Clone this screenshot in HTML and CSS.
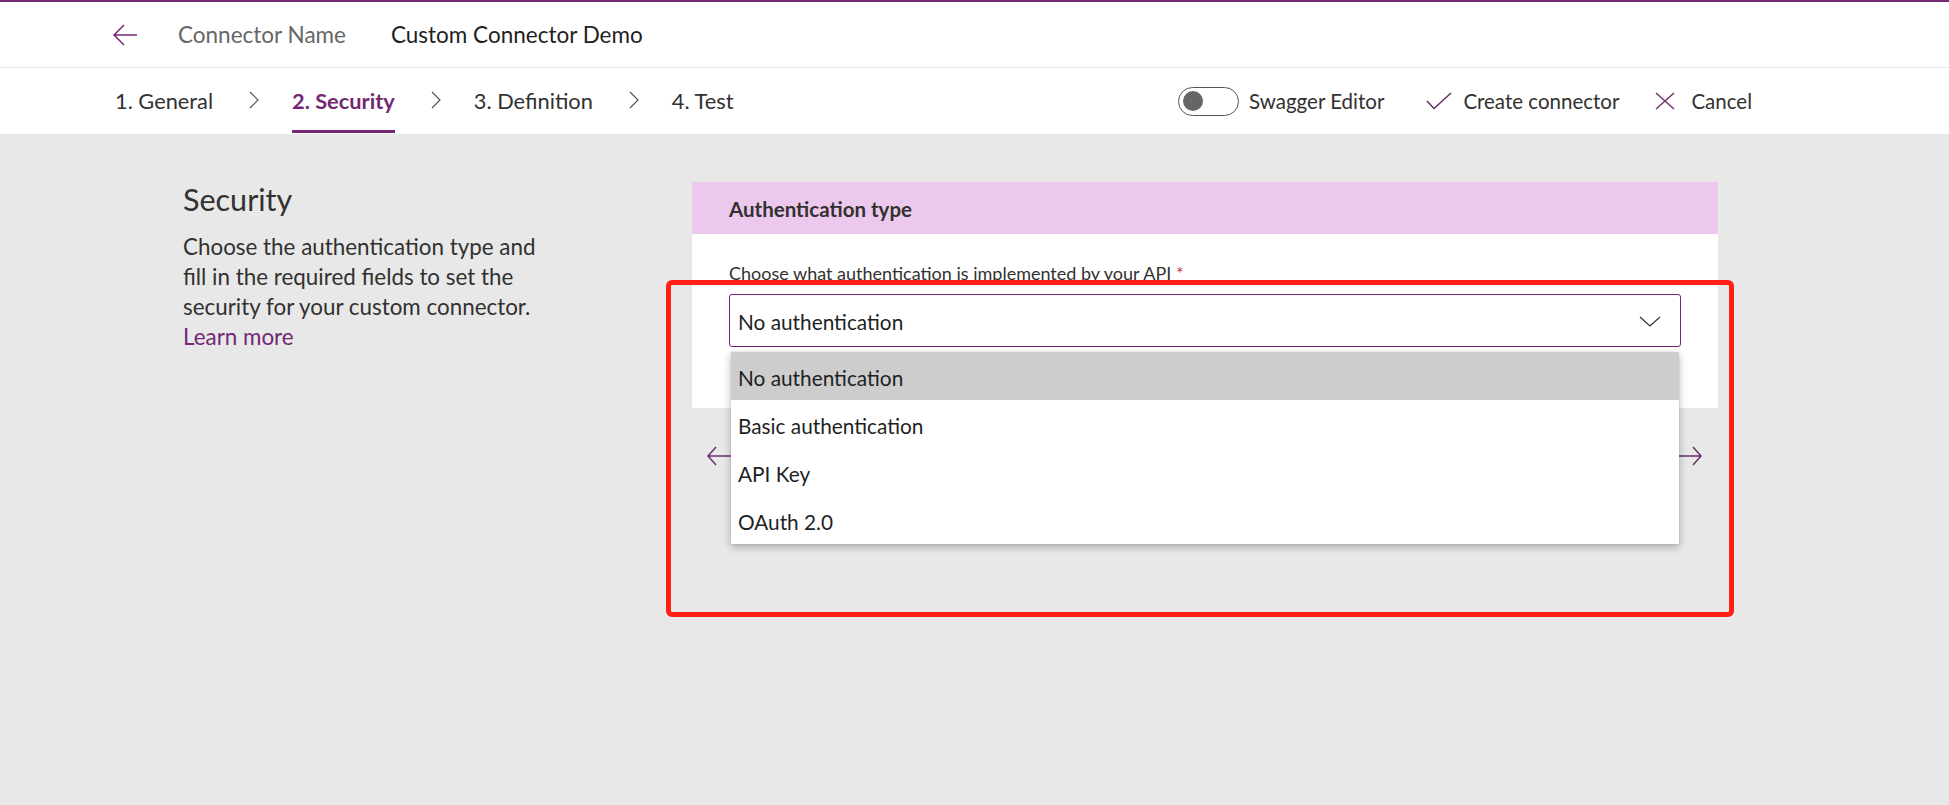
FILE: index.html
```html
<!DOCTYPE html>
<html lang="en">
<head>
<meta charset="utf-8">
<title>Custom Connector Demo - Security</title>
<link rel="stylesheet" href="styles.css">
</head>
<body>
<div class="app">
  <div class="topline"></div>
  <header class="titlebar">
    <button class="back" aria-label="Back">
      <svg width="24" height="22" viewBox="0 0 24 22"><path d="M11 1 L1 11 L11 21 M1 11 H24" fill="none" stroke="#742774" stroke-width="1.5"/></svg>
    </button>
    <span class="name-label">Connector Name</span>
    <span class="name-value">Custom Connector Demo</span>
  </header>
  <nav class="steps">
    <ol class="tabs">
      <li class="tab">1. General</li>
      <li class="sep"><svg width="10" height="18" viewBox="0 0 10 18"><path d="M1 1 L9 9 L1 17" fill="none" stroke="#555" stroke-width="1.2"/></svg></li>
      <li class="tab active">2. Security</li>
      <li class="sep"><svg width="10" height="18" viewBox="0 0 10 18"><path d="M1 1 L9 9 L1 17" fill="none" stroke="#555" stroke-width="1.2"/></svg></li>
      <li class="tab">3. Definition</li>
      <li class="sep"><svg width="10" height="18" viewBox="0 0 10 18"><path d="M1 1 L9 9 L1 17" fill="none" stroke="#555" stroke-width="1.2"/></svg></li>
      <li class="tab">4. Test</li>
    </ol>
    <div class="actions">
      <label class="toggle"><span class="switch"><span class="knob"></span></span>Swagger Editor</label>
      <button class="action create">
        <svg width="26" height="18" viewBox="0 0 26 18"><path d="M1 9 L8 16.5 L25 1" fill="none" stroke="#5e2a60" stroke-width="1.4"/></svg>
        Create connector
      </button>
      <button class="action cancel">
        <svg width="20" height="18" viewBox="0 0 20 18"><path d="M1 1 L19 17 M19 1 L1 17" fill="none" stroke="#6a2e6c" stroke-width="1.4"/></svg>
        Cancel
      </button>
    </div>
  </nav>
  <main class="content">
    <section class="intro">
      <h1 class="intro-title">Security</h1>
      <p class="intro-text">Choose the authentication type and<br>fill in the required fields to set the<br>security for your custom connector.<br><a class="link" href="#">Learn more</a></p>
    </section>
    <section class="panel">
      <div class="card">
        <div class="card-head">Authentication type</div>
        <div class="card-body">
          <div class="field-label">Choose what authentication is implemented by your API <span class="req">*</span></div>
          <div class="select-wrap">
            <div class="select">
              <span>No authentication</span>
              <svg width="22" height="11" viewBox="0 0 22 11"><path d="M1 1 L11 10 L21 1" fill="none" stroke="#333" stroke-width="1.2"/></svg>
            </div>
            <ul class="menu">
              <li class="menu-item selected">No authentication</li>
              <li class="menu-item">Basic authentication</li>
              <li class="menu-item">API Key</li>
              <li class="menu-item">OAuth 2.0</li>
            </ul>
          </div>
        </div>
      </div>
      <div class="pager">
        <svg width="24" height="20" viewBox="0 0 24 20"><path d="M9 1 L1 10 L9 19 M1 10 H24" fill="none" stroke="#6a2e6c" stroke-width="1.5"/></svg>
        <svg width="24" height="20" viewBox="0 0 24 20"><path d="M15 1 L23 10 L15 19 M0 10 H23" fill="none" stroke="#6a2e6c" stroke-width="1.5"/></svg>
      </div>
      <div class="highlight"></div>
    </section>
  </main>
</div>
</body>
</html>
```

FILE: styles.css
```css
* { box-sizing: border-box; }
html, body { margin: 0; padding: 0; }
body {
  font-family: Lato, "Open Sans", sans-serif;
  color: #252423;
  background: #e8e8e8;
  width: 1949px;
  height: 805px;
  overflow: hidden;
}
.app { display: flex; flex-direction: column; height: 805px; }
.topline { height: 2px; background: #742774; }
.titlebar {
  height: 66px;
  background: #fff;
  border-bottom: 1px solid #e6e6e6;
  display: flex;
  align-items: center;
  padding-left: 113px;
  font-size: 22.5px;
}
.back {
  border: 0; background: none; padding: 0; margin: 0;
  width: 24px; height: 22px; display: flex;
  margin-right: 41px;
}
.name-label { color: #666; margin-right: 45px; }
.name-value { color: #1f1f1f; }

.steps {
  height: 66px;
  background: #fff;
  display: flex;
  align-items: stretch;
  padding-left: 115px;
  padding-right: 197px;
}
.tabs {
  list-style: none; margin: 0; padding: 0;
  display: flex; align-items: stretch;
  font-size: 21.8px;
}
.tab {
  position: relative;
  display: flex; align-items: center;
  color: #323130;
  padding-bottom: 2px;
}
.tab.active { color: #742774; font-weight: 700; }
.tab.active::after {
  content: "";
  position: absolute; left: 0; right: 0; bottom: 1px;
  height: 3px; background: #742774;
}
.sep { display: flex; align-items: center; margin: 0 33px 0 36px; padding-bottom: 2px; }
.actions {
  margin-left: auto;
  display: flex; align-items: center;
  font-size: 20.5px;
  color: #323130;
}
.toggle { display: flex; align-items: center; gap: 10px; margin-right: 42px; }
.switch {
  width: 61px; height: 29px;
  border: 1px solid #555;
  border-radius: 15px;
  display: flex; align-items: center;
  padding-left: 4px;
}
.knob { width: 20px; height: 20px; border-radius: 50%; background: #666; }
.action {
  border: 0; background: none; padding: 0;
  font: inherit; color: inherit;
  display: flex; align-items: center;
}
.create { gap: 11px; margin-right: 36px; }
.cancel { gap: 16px; }

.content { flex: 1; display: flex; padding-top: 48px; }
.intro { width: 692px; padding-left: 183px; }
.intro-title {
  margin: 0;
  font-weight: 400;
  font-size: 30.5px;
  line-height: 34px;
  color: #323130;
}
.intro-text {
  margin: 16px 0 0;
  font-size: 22.4px;
  line-height: 30px;
  color: #323130;
}
.link { color: #742774; text-decoration: none; }

.panel { position: relative; width: 1026px; }
.card { background: #fff; }
.card-head {
  height: 52px;
  background: #ecc9ec;
  display: flex; align-items: center;
  padding: 2px 0 0 37px;
  font-size: 20.5px;
  font-weight: 700;
  color: #323130;
}
.card-body { padding: 27px 37px 61px; }
.field-label {
  font-size: 18px;
  line-height: 24px;
  color: #323130;
  margin-bottom: 9px;
}
.req { color: #d13438; }
.select-wrap { position: relative; }
.select {
  height: 53px;
  border: 1px solid #742774;
  border-radius: 3px;
  display: flex; align-items: center; justify-content: space-between;
  padding: 2px 19px 0 8px;
  font-size: 20.8px;
  color: #1f1f1f;
}
.menu {
  position: absolute;
  top: 58px; left: 2px;
  width: 948px;
  margin: 0; padding: 0; list-style: none;
  background: #fff;
  box-shadow: 0 3px 8px rgba(0,0,0,0.28), 0 0 2px rgba(0,0,0,0.1);
  z-index: 2;
}
.menu-item {
  height: 48px;
  display: flex; align-items: center;
  padding: 2px 0 0 7px;
  font-size: 20.8px;
  color: #1f1f1f;
}
.menu-item.selected { background: #cdcdcd; }
.pager {
  display: flex; justify-content: space-between;
  padding: 0 16px 0 15px;
  margin-top: 38px;
}
.highlight {
  position: absolute;
  left: -26px; top: 98px;
  width: 1068px; height: 337px;
  border: 5px solid #ff2015;
  border-radius: 6px;
  z-index: 3;
  pointer-events: none;
}
```
